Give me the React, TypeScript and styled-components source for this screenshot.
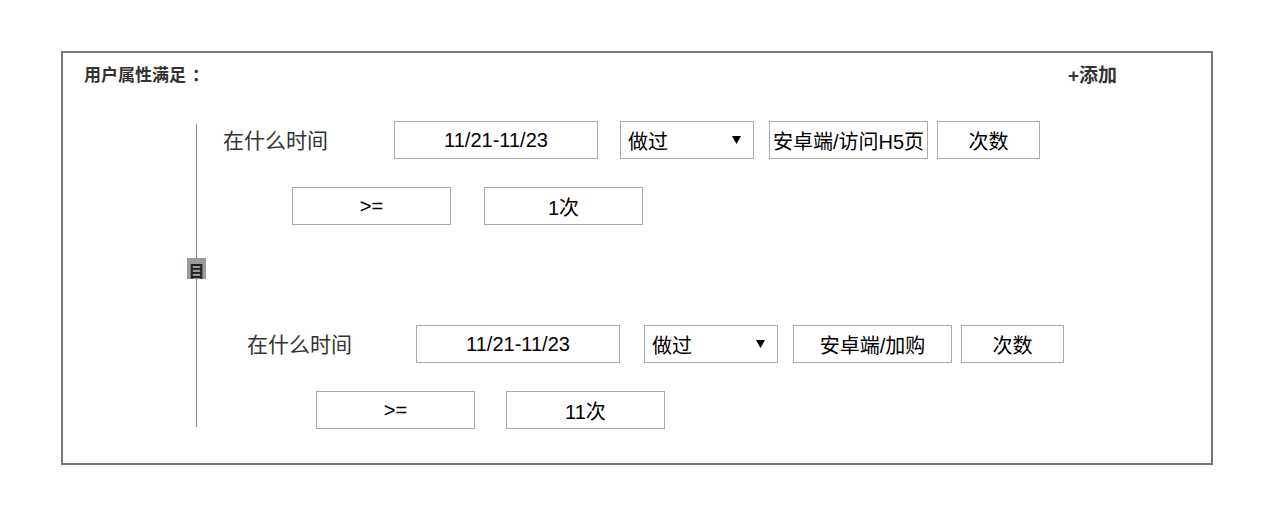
import React from "react";
import styled, { createGlobalStyle } from "styled-components";

const Global = createGlobalStyle`
  html, body { margin: 0; padding: 0; background: #fff; }
  body { font-family: "Liberation Sans", "Noto Sans CJK SC", sans-serif; color: #000; }
  * { box-sizing: border-box; }
`;

const Page = styled.div`
  padding: 51px 0 0 61px;
`;

const Card = styled.div`
  width: 1152px;
  height: 414px;
  border: 2px solid #777;
  background: #fff;
`;

const Header = styled.div`
  height: 41px;
  padding: 0 94px 0 21px;
  display: flex;
  align-items: center;
  justify-content: space-between;
  font-weight: bold;
  color: #333;
`;

const Title = styled.span`
  font-size: 17px;
  font-family: "Noto Sans CJK SC", sans-serif;
`;

const Colon = styled.span`
  margin-left: 6px;
`;

const AddLink = styled.span`
  font-size: 19px;
  cursor: pointer;
`;

const Body = styled.div`
  display: flex;
  padding: 27px 0 0 133px;
`;

const Rail = styled.div`
  width: 1px;
  flex-shrink: 0;
  margin-top: 3px;
  display: flex;
  flex-direction: column;
  align-items: center;
`;

const RailLine = styled.div<{ $h: number }>`
  width: 1px;
  height: ${(p) => p.$h}px;
  background: #888;
`;

const RailIcon = styled.div`
  width: 19px;
  height: 21px;
  flex-shrink: 0;
  background: #9a9a9a;
  color: #222;
  font-size: 16px;
  font-weight: bold;
  line-height: 21px;
  padding-top: 2px;
  text-align: center;
  font-family: "Noto Sans CJK SC", sans-serif;
`;

const Groups = styled.div`
  margin-left: 26px;
  display: flex;
  flex-direction: column;
`;

const Group = styled.div<{ $indent: number; $top: number }>`
  padding-left: ${(p) => p.$indent}px;
  margin-top: ${(p) => p.$top}px;
`;

const Row = styled.div<{ $top?: number; $indent?: number }>`
  display: flex;
  align-items: center;
  height: 38px;
  margin-top: ${(p) => p.$top ?? 0}px;
  padding-left: ${(p) => p.$indent ?? 0}px;
`;

const Label = styled.span<{ $w: number }>`
  width: ${(p) => p.$w}px;
  flex-shrink: 0;
  font-size: 21px;
  line-height: 24px;
  margin-top: -3px;
  color: #333;
  font-family: "Noto Sans CJK SC", sans-serif;
`;

const Box = styled.div<{ $w: number; $mr?: number }>`
  width: ${(p) => p.$w}px;
  height: 38px;
  flex-shrink: 0;
  margin-right: ${(p) => p.$mr ?? 0}px;
  border: 1px solid #aaa;
  background: #fff;
  display: flex;
  align-items: center;
  justify-content: center;
  font-size: 20px;
  color: #000;
  white-space: nowrap;
`;

const SelectBox = styled(Box)`
  justify-content: space-between;
  padding: 0 12px 0 7px;
`;

const Arrow = () => (
  <svg width="9" height="8" viewBox="0 0 9 8">
    <path d="M0 0 H9 L4.5 8 Z" fill="#000" />
  </svg>
);

type Cond = {
  target: string;
  count: string;
};

const ConditionGroup = ({
  cond,
  indent,
  top,
  labelW,
  dateGap,
  opGap,
}: {
  cond: Cond;
  indent: number;
  top: number;
  labelW: number;
  dateGap: number;
  opGap: number;
}) => (
  <Group $indent={indent} $top={top}>
    <Row>
      <Label $w={labelW}>在什么时间</Label>
      <Box $w={204} $mr={dateGap}>11/21-11/23</Box>
      <SelectBox $w={134} $mr={15}>
        <span>做过</span>
        <Arrow />
      </SelectBox>
      <Box $w={159} $mr={9}>{cond.target}</Box>
      <Box $w={103}>次数</Box>
    </Row>
    <Row $top={28} $indent={69}>
      <Box $w={159} $mr={opGap}>&gt;=</Box>
      <Box $w={159}>{cond.count}</Box>
    </Row>
  </Group>
);

export default function App() {
  return (
    <>
      <Global />
      <Page>
        <Card>
          <Header>
            <Title>
              用户属性满足<Colon>：</Colon>
            </Title>
            <AddLink>+添加</AddLink>
          </Header>
          <Body>
            <Rail>
              <RailLine $h={134} />
              <RailIcon>目</RailIcon>
              <RailLine $h={148} />
            </Rail>
            <Groups>
              <ConditionGroup
                cond={{ target: "安卓端/访问H5页", count: "1次" }}
                indent={0}
                top={0}
                labelW={171}
                dateGap={22}
                opGap={33}
              />
              <ConditionGroup
                cond={{ target: "安卓端/加购", count: "11次" }}
                indent={24}
                top={100}
                labelW={169}
                dateGap={24}
                opGap={31}
              />
            </Groups>
          </Body>
        </Card>
      </Page>
    </>
  );
}
